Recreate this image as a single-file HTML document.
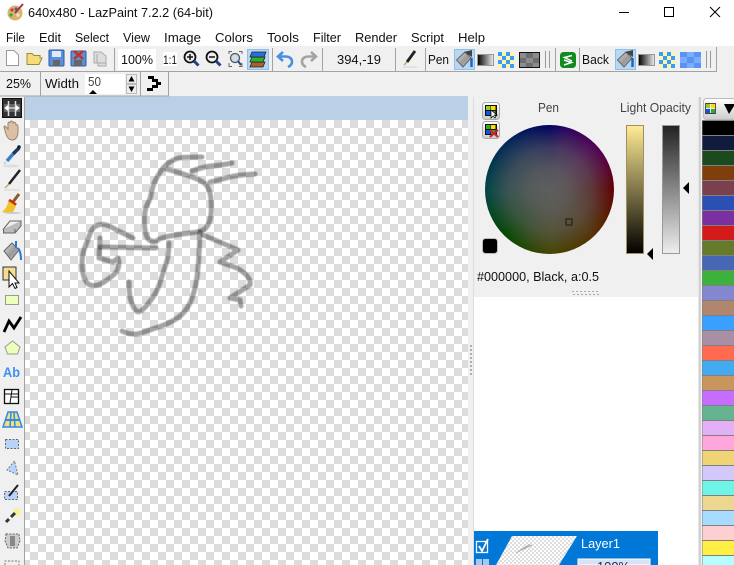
<!DOCTYPE html>
<html><head><meta charset="utf-8"><style>
html,body{margin:0;padding:0;width:734px;height:565px;overflow:hidden;background:#f0f0f0}
.a{position:absolute}
#cv{left:25px;top:96px;width:443px;height:469px;background:linear-gradient(#b9d0e6,#b9d0e6) 0 0/100% 24px no-repeat,repeating-conic-gradient(#dcdcdc 0 25%,#fff 0 50%) -3px 24px/16px 16px}
#wh{left:485px;top:125px;width:129px;height:129px;border-radius:50%;background:radial-gradient(closest-side,rgba(94,94,94,1) 0,rgba(94,94,94,.9) 30%,rgba(94,94,94,.6) 65%,rgba(94,94,94,.22) 88%,rgba(94,94,94,0) 100%),conic-gradient(#000060 0deg,#2a0060 15deg,#500058 45deg,#5a0030 70deg,#600000 90deg,#553000 135deg,#454500 180deg,#004800 225deg,#004545 270deg,#00255a 320deg,#000060 360deg)}
svg{position:absolute;left:0;top:0}
text{font-family:"Liberation Sans",sans-serif;font-size:12.5px;fill:#111}
</style></head><body>
<div class="a" style="left:0;top:0;width:734px;height:46px;background:#fff"></div>
<div class="a" id="cv"></div>
<div class="a" style="left:474px;top:97px;width:224px;height:468px;background:#fff"></div>
<div class="a" style="left:474px;top:97px;width:224px;height:200px;background:#f0f0f0"></div>
<div class="a" id="wh"></div>
<svg width="734" height="565" viewBox="0 0 734 565">
<defs>
<pattern id="ck" width="8" height="8" patternUnits="userSpaceOnUse" x="498" y="52"><rect width="8" height="8" fill="#fdf6a8"/><rect x="0" width="4" height="4" fill="#3a9cf5"/><rect x="4" y="4" width="4" height="4" fill="#3a9cf5"/></pattern>
<pattern id="ck2" width="8" height="8" patternUnits="userSpaceOnUse" x="659" y="52"><rect width="8" height="8" fill="#fdf6a8"/><rect x="0" width="4" height="4" fill="#3a9cf5"/><rect x="4" y="4" width="4" height="4" fill="#3a9cf5"/></pattern>
<pattern id="tn" width="4" height="4" patternUnits="userSpaceOnUse"><rect width="4" height="4" fill="#fff"/><rect width="2" height="2" fill="#ddd"/><rect x="2" y="2" width="2" height="2" fill="#ddd"/></pattern>
<linearGradient id="g1"><stop offset="0" stop-color="#000"/><stop offset="1" stop-color="#eee"/></linearGradient>
<linearGradient id="lb" x2="0" y2="1"><stop offset="0" stop-color="#ffec95"/><stop offset="1" stop-color="#000"/></linearGradient>
<linearGradient id="ob" x2="0" y2="1"><stop offset="0" stop-color="#222"/><stop offset="1" stop-color="#eee"/></linearGradient>
<linearGradient id="btn" x2="0" y2="1"><stop offset="0" stop-color="#fff"/><stop offset="1" stop-color="#ccc"/></linearGradient>
<linearGradient id="bk" x1="0" y1="0" x2="1" y2="1"><stop offset="0" stop-color="#ddd"/><stop offset=".55" stop-color="#999"/><stop offset="1" stop-color="#c8c8c8"/></linearGradient>
<filter id="sf" x="-5%" y="-5%" width="110%" height="110%"><feGaussianBlur stdDeviation=".55"/></filter>
</defs>

<!-- title -->
<circle cx="15" cy="13" r="7.5" fill="#d9b36c"/><circle cx="12" cy="10" r="1.6" fill="#d33"/><circle cx="16" cy="9" r="1.6" fill="#36c"/><circle cx="11" cy="15" r="1.6" fill="#3a3"/><circle cx="18" cy="15" r="1.8" fill="#edc"/>
<path d="M15 13L23 4" stroke="#a33" stroke-width="2"/>
<text x="28" y="17" textLength="185" lengthAdjust="spacingAndGlyphs" style="font-size:13px">640x480 - LazPaint 7.2.2 (64-bit)</text>
<path d="M619 12.500H629" stroke="#000"/><rect x="664.500" y="7.500" width="9" height="9" fill="none" stroke="#000"/><path d="M710 7L720 17M720 7L710 17" stroke="#000"/>

<!-- menu -->
<text x="6" y="42" textLength="19" lengthAdjust="spacingAndGlyphs">File</text><text x="39" y="42" textLength="22" lengthAdjust="spacingAndGlyphs">Edit</text><text x="75" y="42" textLength="34" lengthAdjust="spacingAndGlyphs">Select</text><text x="123" y="42" textLength="27" lengthAdjust="spacingAndGlyphs">View</text><text x="164" y="42" textLength="37" lengthAdjust="spacingAndGlyphs">Image</text><text x="215" y="42" textLength="38" lengthAdjust="spacingAndGlyphs">Colors</text><text x="267" y="42" textLength="32" lengthAdjust="spacingAndGlyphs">Tools</text><text x="313" y="42" textLength="28" lengthAdjust="spacingAndGlyphs">Filter</text><text x="355" y="42" textLength="42" lengthAdjust="spacingAndGlyphs">Render</text><text x="411" y="42" textLength="33" lengthAdjust="spacingAndGlyphs">Script</text><text x="458" y="42" textLength="27" lengthAdjust="spacingAndGlyphs">Help</text>

<!-- toolbar lines -->
<path d="M0 71.500H717M716.500 47V71M114.500 48V71M272.500 48V71M322.500 48V71M395.500 48V71M425.500 48V71M555.500 48V71M579.500 48V71M0 96H169M40.500 72V96M140.500 72V96M168.500 72V96" stroke="#a3a3a3" fill="none"/>

<!-- row1 icons -->
<path d="M6.500 50.500H14L18.500 55V65.500H6.500Z" fill="#fff" stroke="#999"/>
<path d="M27 64.500V53.500H32L34 55.500H40V58H42L39 64.500Z" fill="#f6dc78" stroke="#a08a30"/>
<rect x="49" y="50" width="15" height="16" rx="1" fill="#5a8fdc" stroke="#305a9c"/><rect x="52" y="51" width="9" height="6" fill="#dfe9f7"/><rect x="53" y="60" width="7" height="6" fill="#666"/>
<rect x="71" y="51" width="15" height="15" rx="1" fill="#5a8fdc" stroke="#305a9c"/><rect x="74" y="60" width="8" height="6" fill="#666"/><path d="M74 51L83 59M83 51L74 59" stroke="#c8301c" stroke-width="2.500"/>
<path d="M94 52H101L106 56V66H98V63H94Z" fill="#ddd" stroke="#aaa"/><path d="M97 54V63H106" fill="none" stroke="#aaa"/>
<rect x="118" y="49" width="38" height="21" fill="#fff"/>
<text x="121" y="64" textLength="32" lengthAdjust="spacingAndGlyphs">100%</text>
<rect x="163" y="52" width="14" height="14" fill="#fff"/><text x="163" y="64" textLength="14" lengthAdjust="spacingAndGlyphs" style="font-size:12px">1:1</text>
<circle cx="190" cy="57" r="5.500" fill="#eee" stroke="#111" stroke-width="1.800"/><path d="M187 57H193M190 54V60" stroke="#111" stroke-width="1.500"/><path d="M194 61L198.500 65.500" stroke="#24408c" stroke-width="3"/>
<circle cx="212" cy="57" r="5.500" fill="#eee" stroke="#111" stroke-width="1.800"/><path d="M209 57H215" stroke="#111" stroke-width="1.500"/><path d="M216 61L220.500 65.500" stroke="#24408c" stroke-width="3"/>
<path d="M229 54V51.500H232M239 51.500H242V54M242 63V66.500H239M232 66.500H229V63" fill="none" stroke="#666"/><circle cx="235" cy="58" r="4.500" fill="#cde" stroke="#555" stroke-width="1.300"/><path d="M238 61L241 65" stroke="#2a4a90" stroke-width="2"/>
<rect x="247.500" y="49.500" width="21" height="20" fill="#b9d7f1" stroke="#8cc0ee"/>
<path d="M252 62L265 62L263 67H250Z" fill="#a5622a" stroke="#222" stroke-width=".8"/><path d="M252 57L265 57L263 62H250Z" fill="#2fb02f" stroke="#222" stroke-width=".8"/><path d="M252 52L266 52L264 57H250Z" fill="#2a6fe0" stroke="#222" stroke-width=".8"/>
<path d="M283 52L278 56.500L283 61M279 56.500H286Q292 57 292 62Q292 65 288 67" fill="none" stroke="#4a90e2" stroke-width="2.600"/>
<path d="M311 52L316 56.500L311 61M315 56.500H308Q302 57 302 62Q302 65 306 67" fill="none" stroke="#a3a3a3" stroke-width="2.600"/>
<text x="337" y="64" textLength="44" lengthAdjust="spacingAndGlyphs">394,-19</text>
<path d="M415 51L407 62" stroke="#222" stroke-width="2.800"/><path d="M407 62L404 65" stroke="#c9a660" stroke-width="1.500"/><path d="M403 67H417" stroke="#ddd" stroke-width="1.500"/>
<text x="428" y="64" textLength="21" lengthAdjust="spacingAndGlyphs">Pen</text>
<rect x="454.500" y="49.500" width="20" height="20" fill="#b9d7f1" stroke="#8cc0ee"/>
<path d="M456.500 60L465 52L471 58L463 67Z" fill="url(#bk)" stroke="#666"/><path d="M464 52L472 50V57" fill="#444"/><path d="M471.500 58V67" stroke="#1f63b5" stroke-width="2.400"/>
<rect x="477.500" y="54.500" width="16" height="11" fill="url(#g1)" stroke="#999"/>
<rect x="498" y="52" width="16" height="16" fill="url(#ck)"/>
<rect x="519.500" y="52.500" width="20" height="15" fill="#8c8c8c" stroke="#111"/><rect x="526" y="53" width="7" height="5" fill="#6e6e6e"/><rect x="520" y="58" width="6" height="5" fill="#6e6e6e"/><rect x="533" y="58" width="6" height="5" fill="#6e6e6e"/><rect x="526" y="63" width="7" height="4" fill="#6e6e6e"/>
<path d="M545.500 51V68M549.500 51V68" stroke="#999"/>
<rect x="560" y="52" width="16" height="16" rx="3.500" fill="#118a1e"/><path d="M572 55.500L564.500 57.500L572 61M564 60L571.500 62.500L564 65" fill="none" stroke="#fff" stroke-width="1.500"/>
<text x="582" y="64" textLength="27" lengthAdjust="spacingAndGlyphs">Back</text>
<rect x="615.500" y="49.500" width="20" height="20" fill="#b9d7f1" stroke="#8cc0ee"/>
<path d="M617.500 60L626 52L632 58L624 67Z" fill="url(#bk)" stroke="#666"/><path d="M625 52L633 50V57" fill="#444"/><path d="M632.500 58V67" stroke="#1f63b5" stroke-width="2.400"/>
<rect x="638.500" y="54.500" width="16" height="11" fill="url(#g1)" stroke="#999"/>
<rect x="659" y="52" width="16" height="16" fill="url(#ck2)"/>
<rect x="680" y="52" width="21" height="16" fill="#5b94f0"/><rect x="687" y="52" width="7" height="5" fill="#7aacff"/><rect x="680" y="57" width="7" height="6" fill="#7aacff"/><rect x="694" y="57" width="7" height="6" fill="#7aacff"/><rect x="687" y="63" width="7" height="5" fill="#7aacff"/>
<path d="M706.500 51V68M710.500 51V68" stroke="#999"/>

<!-- row2 -->
<text x="6" y="88" textLength="25" lengthAdjust="spacingAndGlyphs">25%</text>
<text x="45" y="88" textLength="34" lengthAdjust="spacingAndGlyphs">Width</text>
<rect x="85" y="74" width="40" height="20" fill="#fff"/>
<text x="88" y="86" textLength="13" lengthAdjust="spacingAndGlyphs" style="fill:#444">50</text>
<path d="M89 94L93 90L97 94Z" fill="#000"/>
<rect x="126.500" y="74.500" width="10" height="9" fill="#eee" stroke="#bbb"/><rect x="126.500" y="84.500" width="10" height="9" fill="#eee" stroke="#bbb"/>
<path d="M131.500 76L128.500 81.500H134.500ZM131.500 92L128.500 86.500H134.500Z" fill="#000"/>
<path d="M148 76H154V79H158V82H161V85H158V88H153V91H147V88H152V85H156V82H152V79H148Z" fill="#000"/>

<!-- left tools -->
<path d="M24.500 97V565" stroke="#a3a3a3"/>
<rect x="2.500" y="98.500" width="19" height="19" fill="#333" stroke="#111"/><path d="M4 104H20V112H4Z" fill="#666"/><path d="M8.500 101V116M15.500 101V116" stroke="#ddd" stroke-width="1.500"/><path d="M5 108H19M5 108L7.500 106V110ZM19 108L16.500 106V110Z" stroke="#fff" fill="#fff"/>
<path d="M6 134L4 127Q4 125 6 127L8 129V123Q9 121 10 123V122Q11 120 13 122V123Q15 121 16 124V125Q18 124 18 127V133Q17 140 12 140Q8 140 6 134Z" fill="#dcbfa5" stroke="#9c8470"/>
<ellipse cx="11" cy="166" rx="8" ry="1.500" fill="#ddd"/><path d="M19 148L13 154" stroke="#1d3a5a" stroke-width="3.500"/><path d="M13 154L7 161" stroke="#3a7fcb" stroke-width="3.500"/><path d="M6 162L4 164" stroke="#b9d2ee" stroke-width="2"/><circle cx="19" cy="147" r="1.800" fill="#123"/>
<path d="M20 170L9 184" stroke="#222" stroke-width="2.500"/><path d="M9 184L5 188" stroke="#c9a660" stroke-width="1.500"/><path d="M4 190H20" stroke="#ddd" stroke-width="1.500"/>
<path d="M19 194L13 202" stroke="#8a5a20" stroke-width="3"/><path d="M9 200L16 205" stroke="#c8301c" stroke-width="3"/><path d="M8.500 201L16 206L13 212Q7 214 2 212Q7 208 8.500 201Z" fill="#f0c429"/><ellipse cx="13" cy="213" rx="8" ry="1" fill="#ccc"/>
<path d="M3.500 229L10 221H21L15 229Z" fill="#eee" stroke="#666"/><path d="M3.500 229V233H15L21 226V221M15 229V233" fill="#bbb" stroke="#666"/>
<path d="M4 251L12 243L19 250L11 260Z" fill="url(#bk)" stroke="#666"/><path d="M16 241V248M18 248Q21 252 21 260" stroke="#2a78d0" stroke-width="2" fill="none"/>
<rect x="3" y="267" width="13" height="13" fill="#f4df90" stroke="#333"/><path d="M9 271V287L12.500 283.500L15 288.500L17 287.500L15 283H19Z" fill="#fff" stroke="#111"/>
<rect x="5.500" y="295.500" width="13" height="9" fill="#eeffbb" stroke="#999"/>
<path d="M4 332L9 321L14 328L21 317" fill="none" stroke="#000" stroke-width="2.800"/>
<path d="M12.500 341L20 347L17.500 354H7.500L5 347Z" fill="#eeffbb" stroke="#999"/>
<text x="3" y="377" textLength="17" lengthAdjust="spacingAndGlyphs" style="font-size:14px;font-weight:bold;fill:#3f8ff0">Ab</text>
<rect x="4.500" y="389.500" width="14" height="14" fill="#fff" stroke="#111" stroke-width="1.300"/><path d="M5 394H18M12 390L10 403M18 397H11" stroke="#111" fill="none"/>
<path d="M3 427L8 412H17L22 427Z" fill="#f4e07a"/><path d="M3 427L8 412H17L22 427Z" fill="none" stroke="#2f8ae8" stroke-width="1.500"/><path d="M5 420H20" stroke="#2f8ae8" stroke-width="2"/><path d="M11 412L10 427M14 412L15 427" stroke="#2f8ae8" stroke-width="1.500"/>
<rect x="5.500" y="439.500" width="13" height="9" fill="#b9d2fa" stroke="#666" stroke-dasharray="2 1.500"/>
<path d="M14.500 461L7 470L18 475Z" fill="#b9d2fa" stroke="#777" stroke-dasharray="2 1.500"/>
<rect x="4.500" y="491.500" width="13" height="8" fill="#b9d2fa" stroke="#666" stroke-dasharray="2 1.500"/><path d="M18 485L9 496" stroke="#222" stroke-width="2"/>
<circle cx="17" cy="512" r="4" fill="#f5f09a"/><path d="M15 513L6 522" stroke="#333" stroke-width="3"/><path d="M11 517L9 519" stroke="#fff" stroke-width="3"/>
<path d="M6 534H19L20 541L17 548H8L5 541Z" fill="#ccc" stroke="#666" stroke-dasharray="2 1.300"/><path d="M10 536H15V546H10Z" fill="#888"/>
<path d="M5 565V561H19V565" fill="#eee" stroke="#777" stroke-dasharray="2 1.500"/>

<!-- drawing -->
<g fill="none" stroke="#000" stroke-opacity=".36" stroke-width="5" stroke-linecap="round" stroke-linejoin="round" filter="url(#sf)">
<path d="M202 157Q188 157 182.500 157.500Q177 158 172.500 160.500Q168 163 165.500 165.500Q163 168 160 172.500Q157 177 155 181Q153 185 151.500 192.500Q150 200 147.500 204Q145 208 144.500 216.500Q144 225 145.500 232.500Q147 240 151.500 241Q156 242 158 240Q160 238 170 236Q180 234 190 233Q200 232 204 229.500Q208 227 210 219.500Q212 212 211 199.500Q210 187 203.500 182.500Q197 178 180 173L163 168"/>
<path d="M192 171Q203 167 210 166Q217 166 232 163"/>
<path d="M210 182Q223 179 230 177Q237 175 255 174"/>
<path d="M133 238Q120 232 114 228.500Q108 225 104 224.500Q100 224 96 226Q92 228 89.500 235Q87 242 84.500 248.500Q82 255 82 263.500Q82 272 84.500 278.500Q87 285 92.500 285.500Q98 286 104 282Q110 278 114.500 274Q119 270 119 262L118 258L113 262L99 258L100 238"/>
<path d="M100 247L156 248"/>
<path d="M169 243Q169 255 166 264Q163 273 160 282.500Q157 292 151 300Q145 308 141.500 310.500Q138 313 135.500 310Q133 307 131 301Q129 295 129 282"/>
<path d="M200 232Q199 262 197 277Q195 292 190 303Q185 313 177.500 318Q170 323 160 326.500Q150 330 141 333Q132 336 122 331"/>
<path d="M203 235Q220 242 229 246L238 250L220 262L237 268Q252 277 250 285L230 298L240 300L241 306"/>
</g>

<!-- splitter -->
<rect x="468" y="96" width="6" height="469" fill="#f0f0f0"/>
<path d="M471 345V376" stroke="#999" stroke-width="1.500" stroke-dasharray="2 2"/>
<path d="M473.500 97V565" stroke="#ddd"/>

<!-- colour panel -->
<rect x="482.500" y="102.500" width="17" height="17" rx="3" fill="url(#btn)" stroke="#aaa"/>
<rect x="485" y="105" width="12" height="11" fill="#111"/><rect x="486" y="106" width="4.500" height="4" fill="#9c2"/><rect x="491" y="106" width="4.500" height="4" fill="#fd0"/><rect x="486" y="111" width="4.500" height="4" fill="#15d"/><rect x="491" y="111" width="4.500" height="4" fill="#3a3"/><path d="M491 110V118L493 116L495 118L496 116L494 115H497Z" fill="#fff" stroke="#000" stroke-width=".7"/>
<rect x="482.500" y="121.500" width="17" height="17" rx="3" fill="url(#btn)" stroke="#aaa"/>
<rect x="485" y="124" width="12" height="11" fill="#111"/><rect x="486" y="125" width="4.500" height="4" fill="#3a2"/><rect x="491" y="125" width="4.500" height="4" fill="#fd0"/><rect x="486" y="130" width="4.500" height="4" fill="#15d"/><rect x="491" y="130" width="4.500" height="4" fill="#3a3"/><path d="M490 130L498 137M498 130L490 137" stroke="#d0202a" stroke-width="2"/>
<text x="538" y="112" textLength="21" lengthAdjust="spacingAndGlyphs" style="fill:#444">Pen</text>
<text x="620" y="112" textLength="71" lengthAdjust="spacingAndGlyphs" style="fill:#444">Light Opacity</text>
<rect x="569" y="222" width="6" height="6" fill="none" stroke="#2c2c20" stroke-width="1.500" transform="translate(-3 -3)"/>
<rect x="482.500" y="238.500" width="15" height="15" rx="3" fill="#000" stroke="#bbb"/>
<rect x="626.500" y="125.500" width="17" height="128" fill="url(#lb)" stroke="#a0905a"/>
<path d="M647 254L653 248V260Z" fill="#000"/>
<rect x="662.500" y="125.500" width="17" height="128" fill="url(#ob)" stroke="#999"/>
<path d="M683 188L689 182V194Z" fill="#000"/>
<text x="477" y="281" textLength="122" lengthAdjust="spacingAndGlyphs">#000000, Black, a:0.5</text>
<path d="M572 291.500H600M573 294.500H600" stroke="#aaa" stroke-dasharray="2 2"/>

<!-- layer -->
<rect x="474" y="531" width="184" height="34" fill="#0078d7"/>
<rect x="476.500" y="541.500" width="11" height="11" fill="#0078d7" stroke="#fff" stroke-width="1.300"/><path d="M479 546L482 551L488 539" fill="none" stroke="#fff" stroke-width="1.800"/>
<rect x="476" y="559" width="13" height="6" fill="#a8c8ef"/><path d="M482.500 559V565" stroke="#0078d7"/>
<path d="M512 536H577L559 565H496Z" fill="url(#tn)"/>
<path d="M516 553L530 544M519 551L532 545" stroke="#aaa" stroke-width="1"/>
<text x="581" y="548" textLength="39" lengthAdjust="spacingAndGlyphs" style="fill:#fff">Layer1</text>
<rect x="578" y="559" width="72" height="6" fill="#d8e2f5" stroke="#fff"/>
<text x="597" y="571" textLength="33" lengthAdjust="spacingAndGlyphs" style="fill:#0a2a5a">100%</text>

<!-- palette -->
<path d="M698.500 97V565" stroke="#e6e6e6"/><path d="M700 97V565" stroke="#b0b0b0"/>
<rect x="703.500" y="98.500" width="32" height="21" rx="3" fill="url(#btn)" stroke="#bbb"/>
<rect x="706" y="104" width="4" height="4" fill="#9c2"/><rect x="711" y="104" width="4" height="4" fill="#fd0"/><rect x="706" y="109" width="4" height="4" fill="#15d"/><rect x="711" y="109" width="4" height="4" fill="#3a3"/><path d="M705.500 103.500H715.500V113.500H705.500Z" fill="none" stroke="#111" stroke-width=".7"/>
<path d="M724 104H734V106L729 114Z" fill="#000"/>
<rect x="702" y="120" width="32" height="445" fill="#808080"/>
<g>
<rect x="702.500" y="121" width="32" height="14" fill="#000"/>
<rect x="702.500" y="136" width="32" height="14" fill="#111c3d"/>
<rect x="702.500" y="151" width="32" height="14" fill="#1b4a1f"/>
<rect x="702.500" y="166" width="32" height="14" fill="#7f3f0c"/>
<rect x="702.500" y="181" width="32" height="14" fill="#7b3f4d"/>
<rect x="702.500" y="196" width="32" height="14" fill="#2a50b4"/>
<rect x="702.500" y="211" width="32" height="14" fill="#7a319f"/>
<rect x="702.500" y="226" width="32" height="14" fill="#d41b1b"/>
<rect x="702.500" y="241" width="32" height="14" fill="#667a2c"/>
<rect x="702.500" y="256" width="32" height="14" fill="#4766b3"/>
<rect x="702.500" y="271" width="32" height="14" fill="#3cb23c"/>
<rect x="702.500" y="286" width="32" height="14" fill="#8486cf"/>
<rect x="702.500" y="301" width="32" height="14" fill="#b0866f"/>
<rect x="702.500" y="316" width="32" height="14" fill="#3aa0ff"/>
<rect x="702.500" y="331" width="32" height="14" fill="#a98fa5"/>
<rect x="702.500" y="346" width="32" height="14" fill="#ff6a50"/>
<rect x="702.500" y="361" width="32" height="14" fill="#42aaf0"/>
<rect x="702.500" y="376" width="32" height="14" fill="#c9955e"/>
<rect x="702.500" y="391" width="32" height="14" fill="#c66cff"/>
<rect x="702.500" y="406" width="32" height="14" fill="#66b391"/>
<rect x="702.500" y="421" width="32" height="14" fill="#e3b0f5"/>
<rect x="702.500" y="436" width="32" height="14" fill="#ffa6da"/>
<rect x="702.500" y="451" width="32" height="14" fill="#f0d374"/>
<rect x="702.500" y="466" width="32" height="14" fill="#d2c9fa"/>
<rect x="702.500" y="481" width="32" height="14" fill="#6ef5e8"/>
<rect x="702.500" y="496" width="32" height="14" fill="#ebd78f"/>
<rect x="702.500" y="511" width="32" height="14" fill="#a8dcff"/>
<rect x="702.500" y="526" width="32" height="14" fill="#fcd0d0"/>
<rect x="702.500" y="541" width="32" height="14" fill="#ffee44"/>
<rect x="702.500" y="556" width="32" height="9" fill="#b4ffff"/>
</g>
</svg>
</body></html>
